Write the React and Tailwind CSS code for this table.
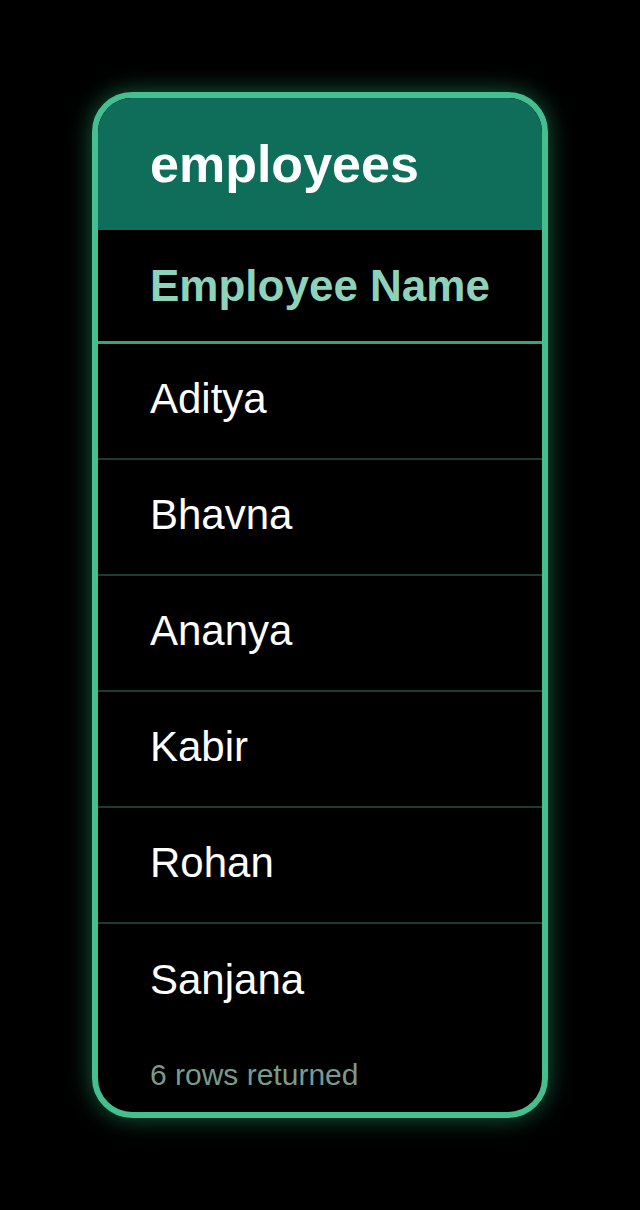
import React from "react";

const employees = ["Aditya", "Bhavna", "Ananya", "Kabir", "Rohan", "Sanjana"];

const App = () => {
  return (
    <div
      className="min-h-screen w-full bg-black flex items-center justify-center"
      style={{ fontFamily: '"Liberation Sans", Arial, sans-serif' }}
    >
      <div className="w-[456px] rounded-[40px] border-[6px] border-[#45be90] overflow-hidden bg-black shadow-[0_0_24px_rgba(40,190,130,0.5)]">
        <div className="h-[132px] bg-[#0f6e59] flex items-center px-[52px]">
          <h1 className="text-[52px] font-bold text-white leading-none">employees</h1>
        </div>
        <div className="h-[114px] border-b-[3px] border-[#36a57c] flex items-center px-[52px]">
          <span className="text-[44px] font-bold text-[#8dd3bb] leading-none">Employee Name</span>
        </div>
        {employees.map((name, i) => (
          <div
            key={name}
            className={
              i < employees.length - 1
                ? "h-[116px] border-b-2 border-[#1d3b31] flex items-center px-[52px] pb-[4px]"
                : "h-[116px] flex items-center px-[52px] pb-[4px]"
            }
          >
            <span className="text-[42px] text-white leading-none">{name}</span>
          </div>
        ))}
        <div className="h-[72px] flex items-center px-[52px] pb-[2px]">
          <span className="text-[30px] text-[#7a9a8c] leading-none">6 rows returned</span>
        </div>
      </div>
    </div>
  );
};

export default App;
